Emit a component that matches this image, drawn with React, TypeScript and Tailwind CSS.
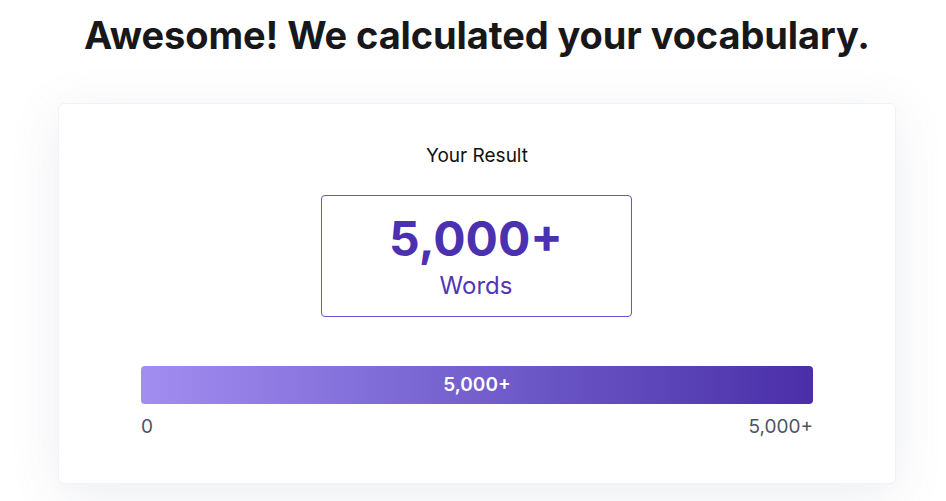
export default function App() {
  return (
    <div className="min-h-[501px] bg-white font-['Inter',sans-serif] pt-[13px]">
      <h1 className="text-center text-[38px] leading-[44px] font-bold tracking-[-0.1px] text-[#18181b] ml-[8px]">
        Awesome! We calculated your vocabulary.
      </h1>
      <div className="ml-[58px] mt-[46px] w-[838px] h-[381px] rounded-md border border-[#f1f2f4] bg-white shadow-[0_10px_50px_rgba(100,110,140,0.12)] flex flex-col items-center pt-[40px]">
        <p className="text-[19px] leading-[24px] text-[#111]">Your Result</p>
        <div className="mt-[27px] -ml-[2px] w-[311px] h-[122px] rounded-[4px] border border-[#6b50d9] flex flex-col items-center pt-[19px]">
          <span className="text-[48px] leading-[48px] font-bold text-[#4b31b0]">5,000+</span>
          <span className="text-[24px] leading-[32px] text-[#5236b8] mt-[7px]">Words</span>
        </div>
        <div className="mt-[49px] w-[672px]">
          <div className="h-[38px] rounded-[4px] bg-gradient-to-r from-[#a28df1] to-[#4a2ea8] flex items-center justify-center">
            <span className="text-[19px] font-semibold text-white">5,000+</span>
          </div>
          <div className="mt-[11px] flex justify-between text-[19px] leading-[24px] text-[#4b5563]">
            <span>0</span>
            <span>5,000+</span>
          </div>
        </div>
      </div>
    </div>
  );
}
